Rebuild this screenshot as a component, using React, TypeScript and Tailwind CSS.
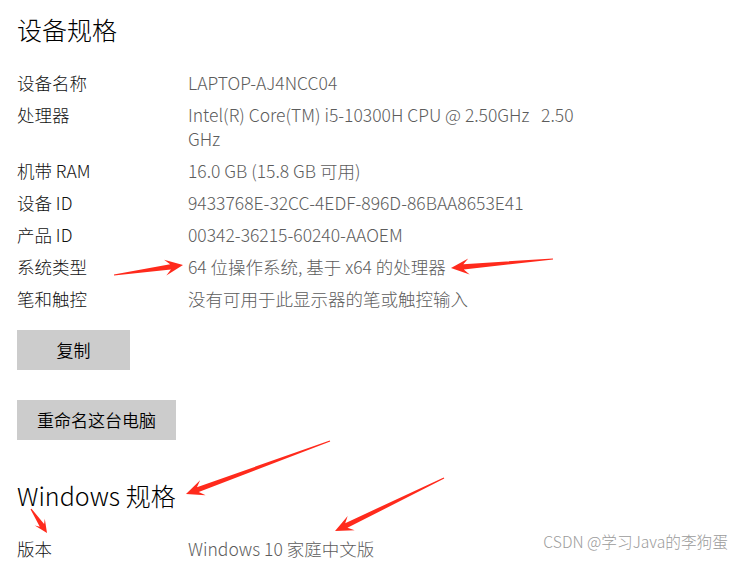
import React from 'react'

const font = { fontFamily: '"Noto Sans CJK SC", "Noto Sans", sans-serif' }

const specs: [string, React.ReactNode][] = [
  ['设备名称', 'LAPTOP-AJ4NCC04'],
  [
    '处理器',
    <>
      Intel(R) Core(TM) i5-10300H CPU @ 2.50GHz&nbsp;&nbsp; 2.50
      <br />
      GHz
    </>,
  ],
  ['机带 RAM', '16.0 GB (15.8 GB 可用)'],
  ['设备 ID', '9433768E-32CC-4EDF-896D-86BAA8653E41'],
  ['产品 ID', '00342-36215-60240-AAOEM'],
  ['系统类型', '64 位操作系统, 基于 x64 的处理器'],
  ['笔和触控', '没有可用于此显示器的笔或触控输入'],
]

type Pt = [number, number]

function arrowPoints(tail: Pt, tip: Pt, L = 18, H = 8, w0 = 0.6, w1 = 2.6) {
  const dx = tip[0] - tail[0]
  const dy = tip[1] - tail[1]
  const len = Math.hypot(dx, dy)
  const ux = dx / len
  const uy = dy / len
  const nx = -uy
  const ny = ux
  const at = (back: number, side: number) =>
    `${tip[0] - ux * back + nx * side},${tip[1] - uy * back + ny * side}`
  return [
    at(len, w0),
    at(L * 0.7, w1),
    at(L, H),
    at(0, 0),
    at(L, -H),
    at(L * 0.7, -w1),
    at(len, -w0),
  ].join(' ')
}

const arrows: { tail: Pt; tip: Pt; L?: number; H?: number }[] = [
  { tail: [114, 275], tip: [183, 265] },
  { tail: [553, 259], tip: [451, 268] },
  { tail: [330, 441], tip: [186, 494] },
  { tail: [31, 509], tip: [47, 533], L: 13, H: 6 },
  { tail: [444, 478], tip: [335, 531] },
]

function Row({ label, value }: { label: string; value: React.ReactNode }) {
  return (
    <div className="flex text-[17.5px] font-light leading-6">
      <div className="w-[171px] shrink-0 text-[#111111]">{label}</div>
      <div className="text-[#5c5c5c]">{value}</div>
    </div>
  )
}

export default function App() {
  return (
    <div
      className="relative h-[562px] w-[743px] overflow-hidden bg-white pl-[17px] pt-[13px]"
      style={font}
    >
      <h1 className="text-[25px] font-light leading-8 text-black">设备规格</h1>

      <div className="mt-[26px] flex flex-col gap-2">
        {specs.map(([l, v]) => (
          <Row key={l} label={l} value={v} />
        ))}
      </div>

      <button className="mt-[19px] block h-10 w-[113px] bg-[#cccccc] text-[17px] font-[350] text-black">
        复制
      </button>
      <button className="mt-[30px] block h-10 w-[159px] bg-[#cccccc] text-[17px] font-[350] text-black">
        重命名这台电脑
      </button>

      <h2 className="mt-[39px] text-[25px] font-light leading-8 text-black">
        Windows 规格
      </h2>

      <div className="mt-[26px]">
        <Row label="版本" value="Windows 10 家庭中文版" />
      </div>

      <div className="absolute right-[15px] top-[532px] text-[15.7px] font-light leading-5 text-[#9b9b9b]">
        CSDN @学习Java的李狗蛋
      </div>

      <svg
        className="pointer-events-none absolute left-0 top-0"
        width="743"
        height="562"
        viewBox="0 0 743 562"
      >
        {arrows.map((a, i) => (
          <polygon
            key={i}
            points={arrowPoints(a.tail, a.tip, a.L, a.H)}
            fill="#ff2a1c"
          />
        ))}
      </svg>
    </div>
  )
}
